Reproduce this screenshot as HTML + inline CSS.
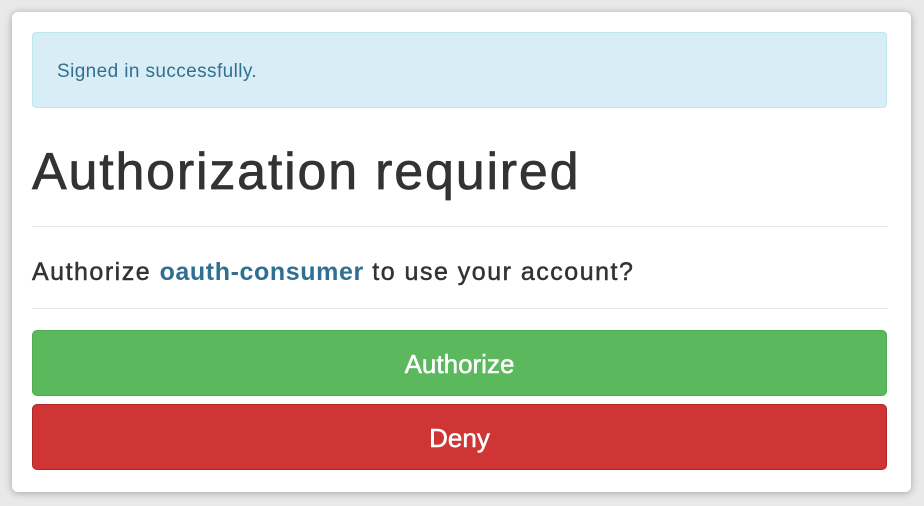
<!DOCTYPE html>
<html><head><meta charset="utf-8"><style>
body{margin:0;width:924px;height:506px;background:#e9e9e9;font-family:"Liberation Sans",sans-serif;overflow:hidden}
.panel{position:absolute;left:12px;top:12px;width:899px;height:480px;background:#fff;border-radius:6px;box-shadow:0 1px 8px rgba(0,0,0,.3)}
.alert{position:absolute;left:20px;top:20px;height:74px;background:#d9edf7;border:1px solid #bce8f1;border-radius:4px;color:#31708f;font-size:19px;letter-spacing:0.4px;line-height:78px;padding-left:24px;width:829px}
h1{position:absolute;left:20px;top:130px;margin:0;font-size:52px;letter-spacing:1.8px;font-weight:normal;color:#333;line-height:60px;-webkit-text-stroke:0.7px #333}
.hr{position:absolute;left:20px;width:856px;height:1px;background:#e6e6e6}
.q{position:absolute;left:20px;top:245px;font-size:25px;letter-spacing:1.5px;color:#333;line-height:30px;-webkit-text-stroke:0.5px #333}
.q a{color:#2f6f91;font-weight:bold;-webkit-text-stroke:0;letter-spacing:0.6px}
.btn{position:absolute;left:20px;width:855px;height:66px;border-radius:5px;color:#fff;font-size:26px;text-align:center;line-height:66px;box-sizing:border-box;-webkit-text-stroke:0.5px #fff}
.g{top:318px;background:#5cb85c;border:1px solid #4cae4c}
.r{top:392px;background:#d03535;border:1px solid #ac2925}
</style></head><body>
<div class="panel">
<div class="alert">Signed in successfully.</div>
<h1>Authorization required</h1>
<div class="hr" style="top:214px"></div>
<div class="q">Authorize <a>oauth-consumer</a> to use your account?</div>
<div class="hr" style="top:296px"></div>
<div class="btn g">Authorize</div>
<div class="btn r">Deny</div>
</div>
</body></html>
